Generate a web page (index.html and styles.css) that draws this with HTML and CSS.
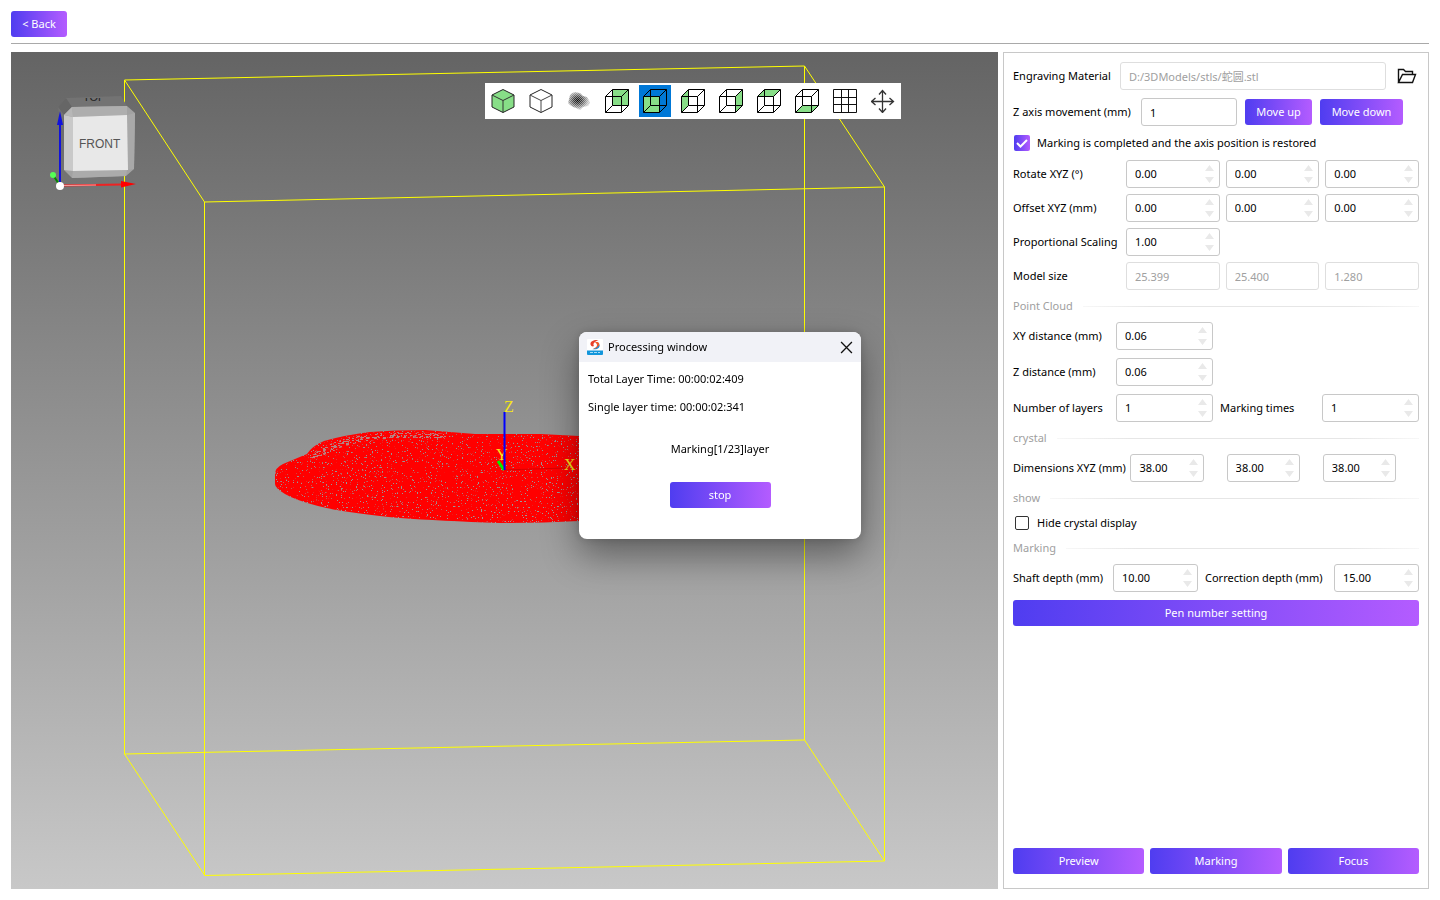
FILE: index.html
```html
<!DOCTYPE html>
<html lang="en">
<head>
	<meta charset="UTF-8">
	<title>Processing window</title>
	<link rel="stylesheet" href="styles.css">
</head>
<body>
	<!-- shared shapes for the view toolbar -->
	<svg class="defs" width="0" height="0" aria-hidden="true">
		<symbol id="wire" viewBox="0 0 24 24">
			<path d="M.5 7.5h16v16H.5zM7.5.5h16v16h-16zM.5 7.5l7-7M16.5 7.5l7-7M.5 23.5l7-7M16.5 23.5l7-7" fill="none" stroke="#000"/>
		</symbol>
		<symbol id="arrows" viewBox="0 0 9 18">
			<path d="M4.5 0L9 6H0zM0 12h9l-4.5 6z" fill="#e9e9e9"/>
		</symbol>
	</svg>

	<header class="top">
		<button class="btn back" type="button">&lt; Back</button>
	</header>

	<main class="main">
		<section class="view">
			<svg class="scene" viewBox="11 52 987 837" role="img" aria-label="3D view">
				<defs>
					<filter id="holes" x="0" y="0" width="1" height="1" color-interpolation-filters="sRGB">
						<feTurbulence type="fractalNoise" baseFrequency="0.8" numOctaves="2" seed="4" result="n"/>
						<feColorMatrix in="n" type="matrix" values="0 0 0 0 0  0 0 0 0 0  0 0 0 0 0  16 0 0 0 -10.6" result="dots"/>
						<feComposite in="SourceGraphic" in2="dots" operator="out"/>
					</filter>
					<filter id="specks" x="0" y="0" width="1" height="1" color-interpolation-filters="sRGB">
						<feTurbulence type="fractalNoise" baseFrequency="0.3 0.7" numOctaves="2" seed="9" result="n"/>
						<feColorMatrix in="n" type="matrix" values="0 0 0 0 0  0 0 0 0 0  0 0 0 0 0  20 0 0 0 -10.6" result="dots"/>
						<feComposite in="SourceGraphic" in2="dots" operator="in"/>
					</filter>
					<clipPath id="topFace"><path d="M66 98h56v4H66z"/></clipPath>
				</defs>

				<!-- crystal box -->
				<g class="crystal">
					<path d="M124.5 80L804.5 66V740L124.5 754z"/>
					<path d="M124.5 80L204.5 202M804.5 66L884.5 187M804.5 740L884.5 861M124.5 754L204.5 875"/>
					<path d="M204.5 202L884.5 187V861L204.5 875.5z"/>
				</g>

				<!-- point cloud -->
				<path filter="url(#holes)" fill="#f00" d="M275 474Q275 468 283 464L295 459L307 454Q312 446 324 441Q345 435 370 432Q395 430 425 430Q450 432 475 434L540 434L579 436L700 445V505L579 521Q540 523 500 523Q440 521 400 518Q345 513 318 506Q295 500 285 494Q275 488 275 484z"/>
				<path filter="url(#specks)" fill="#b98282" d="M308 460Q318 446 350 437Q380 432 410 432L450 434L448 438L400 438Q360 440 340 448Q325 456 308 460z"/>

				<!-- origin axes -->
				<path d="M504 470L565 468" stroke="#d80000"/>
				<path d="M504 470L498 461" stroke="#0e0" stroke-width="3"/>
				<text class="axis" x="496" y="460">Y</text>
				<path d="M504.500 470V412" stroke="#00f" stroke-width="2"/>
				<text class="axis" x="504" y="412">Z</text>
				<text class="axis" x="564" y="470">X</text>

				<!-- navigation cube -->
				<path d="M58 107L66 98L121 96L127 106L72 107L64 115L62 130z" fill="#737373"/>
				<path d="M58 107L66 98L72 107L64 115z" fill="#666"/>
				<path d="M72 107L127 106L135 113L134 169L126 176L72 178L64 170V115z" fill="#a2a2a2"/>
				<path d="M64 115L73 117V171L64 170z" fill="#c9c9c9"/>
				<path d="M72 107L127 106V115L73 117z" fill="#aeaeae"/>
				<path d="M64 115L72 107L73 117z" fill="#b7b7b7"/>
				<path d="M127 115L135 113L134 169L127 170z" fill="#a9a9a9"/>
				<path d="M73 171L127 170L126 176L72 178z" fill="#ababab"/>
				<path d="M73 117L127 115L128 170L73 171z" fill="#e8e8e8"/>
				<text class="face" x="79" y="148">FRONT</text>
				<g clip-path="url(#topFace)"><text class="face face_top" x="83" y="101">TOP</text></g>

				<path d="M60 182V124" stroke="#11d" stroke-width="2"/>
				<path d="M57 125L60 111L63 125z" fill="#11d"/>
				<path d="M60 185.500L122 184.500" stroke="#e22" stroke-width="2"/>
				<path d="M62 185.500L96 185" stroke="#f5a5a5"/>
				<path d="M121 181L136 184L121 187.500z" fill="#f00"/>
				<path d="M53 175L59 184" stroke="#080" stroke-width="2"/>
				<circle cx="53" cy="175" r="3" fill="#5f5"/>
				<circle cx="60" cy="186" r="4" fill="#fff"/>
			</svg>

			<div class="tools">
				<button class="tool" type="button" title="Solid">
					<svg viewBox="0 0 24 24"><path d="M12 .5L23 6v12l-11 5.500L1 18V6z" fill="#87de87" stroke="#222"/><path d="M1 6l11 5.500L23 6M12 11.500v12" fill="none" stroke="#333"/></svg>
				</button>
				<button class="tool" type="button" title="Wireframe">
					<svg viewBox="0 0 24 24"><path d="M12 .5L23 6v12l-11 5.500L1 18V6z" fill="#fff" stroke="#222"/><path d="M1 6l11 5.500L23 6M12 11.500v12" fill="none" stroke="#444"/></svg>
				</button>
				<button class="tool" type="button" title="Points">
					<svg viewBox="0 0 24 24">
						<defs>
							<radialGradient id="cloud" cx=".44" cy=".46"><stop offset="0" stop-color="#000"/><stop offset=".4" stop-color="#444"/><stop offset="1" stop-color="#ccc"/></radialGradient>
							<pattern id="mesh" width="2" height="2" patternUnits="userSpaceOnUse"><path d="M0 0h1v1H0zM1 1h1v1H1z" fill="#fff" fill-opacity=".45"/></pattern>
						</defs>
						<path d="M3 6l2-2 3-1 5 1 3 3 4 1 2 3 1 3-2 3-5 1-3 3-4-2-3-1-3-2-2-2 1-4z" fill="url(#cloud)"/>
						<path d="M0 2h24v20H0z" fill="url(#mesh)"/>
					</svg>
				</button>
				<button class="tool" type="button" title="Back">
					<svg viewBox="0 0 24 24"><path d="M7.500 .5h16v16h-16z" fill="#87de87"/><use href="#wire"/></svg>
				</button>
				<button class="tool on" type="button" title="Front">
					<svg viewBox="0 0 24 24"><path d="M.5 7.500h16v16H.5z" fill="#87de87"/><use href="#wire"/></svg>
				</button>
				<button class="tool" type="button" title="Left">
					<svg viewBox="0 0 24 24"><path d="M.5 7.500l7-7v16l-7 7z" fill="#87de87"/><use href="#wire"/></svg>
				</button>
				<button class="tool" type="button" title="Right">
					<svg viewBox="0 0 24 24"><path d="M16.500 7.500l7-7v16l-7 7z" fill="#87de87"/><use href="#wire"/></svg>
				</button>
				<button class="tool" type="button" title="Top">
					<svg viewBox="0 0 24 24"><path d="M.5 7.500l7-7h16l-7 7z" fill="#87de87"/><use href="#wire"/></svg>
				</button>
				<button class="tool" type="button" title="Bottom">
					<svg viewBox="0 0 24 24"><path d="M.5 23.500l7-7h16l-7 7z" fill="#87de87"/><use href="#wire"/></svg>
				</button>
				<button class="tool" type="button" title="Grid">
					<svg viewBox="0 0 24 24"><path d="M.5.5h23v23H.5zM8.500.5v23M15.500.5v23M.5 8.500h23M.5 15.500h23" fill="none" stroke="#111"/></svg>
				</button>
				<button class="tool" type="button" title="Move">
					<svg viewBox="0 0 24 24"><path d="M11.500 2v21M1 12.500h21M8 5.500l3.500-4 3.500 4M8 19.500l3.500 4 3.500-4M4.500 9L.5 12.500l4 3.500M18.500 9l4 3.500-4 3.500" fill="none" stroke="#333" stroke-width="1.300"/></svg>
				</button>
			</div>
		</section>

		<form class="panel">
			<div class="rows">
				<div class="row">
					<label class="material" for="file">Engraving Material</label>
					<input class="text grow" id="file" type="text" value="D:/3DModels/stls/蛇圆.stl" disabled>
					<button class="folder" type="button" title="Open">
						<svg viewBox="0 0 20 16"><path d="M1.500 14.500V1.500h5l2 2h7v3M1.500 14.500l4-8h13l-3 8z" fill="none" stroke="#111" stroke-width="1.400"/></svg>
					</button>
				</div>
				<div class="row">
					<label class="movement" for="zmove">Z axis movement (mm)</label>
					<input class="text grow" id="zmove" type="text" value="1">
					<button class="btn up" type="button">Move up</button>
					<button class="btn down" type="button">Move down</button>
				</div>
				<label class="check"><input type="checkbox" checked>Marking is completed and the axis position is restored</label>
			</div>

			<div class="xyz">
				<label for="rx">Rotate XYZ (°)</label>
				<span class="spin"><input id="rx" type="text" value="0.00"><svg><use href="#arrows"/></svg></span>
				<span class="spin"><input aria-label="Rotate Y" type="text" value="0.00"><svg><use href="#arrows"/></svg></span>
				<span class="spin"><input aria-label="Rotate Z" type="text" value="0.00"><svg><use href="#arrows"/></svg></span>
				<label for="ox">Offset XYZ (mm)</label>
				<span class="spin"><input id="ox" type="text" value="0.00"><svg><use href="#arrows"/></svg></span>
				<span class="spin"><input aria-label="Offset Y" type="text" value="0.00"><svg><use href="#arrows"/></svg></span>
				<span class="spin"><input aria-label="Offset Z" type="text" value="0.00"><svg><use href="#arrows"/></svg></span>
				<label for="scale">Proportional Scaling</label>
				<span class="spin"><input id="scale" type="text" value="1.00"><svg><use href="#arrows"/></svg></span>
				<label class="first" for="sx">Model size</label>
				<input class="text" id="sx" type="text" value="25.399" disabled>
				<input class="text" aria-label="Model size Y" type="text" value="25.400" disabled>
				<input class="text" aria-label="Model size Z" type="text" value="1.280" disabled>
			</div>

			<h3 class="title">Point Cloud</h3>
			<div class="cloud">
				<label for="xyd">XY distance (mm)</label>
				<span class="spin"><input id="xyd" type="text" value="0.06"><svg><use href="#arrows"/></svg></span>
				<label class="first" for="zd">Z distance (mm)</label>
				<span class="spin"><input id="zd" type="text" value="0.06"><svg><use href="#arrows"/></svg></span>
				<label class="first" for="layers">Number of layers</label>
				<span class="spin"><input id="layers" type="text" value="1"><svg><use href="#arrows"/></svg></span>
				<label class="second" for="times">Marking times</label>
				<span class="spin"><input id="times" type="text" value="1"><svg><use href="#arrows"/></svg></span>
			</div>

			<h3 class="title">crystal</h3>
			<div class="size">
				<label for="dx">Dimensions XYZ (mm)</label>
				<span class="spin"><input id="dx" type="text" value="38.00"><svg><use href="#arrows"/></svg></span>
				<span class="spin"><input aria-label="Dimension Y" type="text" value="38.00"><svg><use href="#arrows"/></svg></span>
				<span class="spin"><input aria-label="Dimension Z" type="text" value="38.00"><svg><use href="#arrows"/></svg></span>
			</div>

			<h3 class="title">show</h3>
			<label class="check"><input type="checkbox">Hide crystal display</label>

			<h3 class="title">Marking</h3>
			<div class="rows">
				<div class="depth">
					<label for="shaft">Shaft depth (mm)</label>
					<span class="spin"><input id="shaft" type="text" value="10.00"><svg><use href="#arrows"/></svg></span>
					<label class="second" for="corr">Correction depth (mm)</label>
					<span class="spin"><input id="corr" type="text" value="15.00"><svg><use href="#arrows"/></svg></span>
				</div>
				<button class="btn" type="button">Pen number setting</button>
			</div>

			<div class="actions">
				<button class="btn" type="button">Preview</button>
				<button class="btn" type="button">Marking</button>
				<button class="btn" type="button">Focus</button>
			</div>
		</form>
	</main>

	<div class="dialog" role="dialog" aria-labelledby="dlg">
		<div class="dialog_bar">
			<svg class="logo" viewBox="0 0 16 16">
				<path d="M1 0h14q1 0 1 1v11H0V1q0-1 1-1z" fill="#fff"/>
				<path d="M11.500 1C7 .5 3 2 3.500 5.500 4 7.500 6 8 7 7 5.500 5 7 3 11.500 1z" fill="#e8402a"/>
				<path d="M8 3.500c3-1.500 5.500 1 4 4-1 2-4 3-6 2 2.500-.5 4-1.500 4-3.500 0-1-1-2-2-2.500z" fill="#f0582a"/>
				<path d="M12 5c2 3-1 6.500-7 5 1 0 3.500 0 5-1.500S12.500 6.500 12 5z" fill="#1b8fd8"/>
				<path d="M0 11.500h16V15q0 1-1 1H1q-1 0-1-1z" fill="#1296db"/>
				<path d="M3 13.500h10" stroke="#a9dcf5" stroke-dasharray="3 1"/>
			</svg>
			<h2 id="dlg">Processing window</h2>
			<button class="close" type="button" title="Close">
				<svg viewBox="0 0 12 12"><path d="M1 1l10 10M11 1L1 11" stroke="#111" stroke-width="1.200"/></svg>
			</button>
		</div>
		<div class="dialog_body">
			<p>Total Layer Time: 00:00:02:409</p>
			<p>Single layer time: 00:00:02:341</p>
			<p class="state">Marking[1/23]layer</p>
			<button class="btn stop" type="button">stop</button>
		</div>
	</div>
</body>
</html>
```
FILE: styles.css
```css
*{
	box-sizing: border-box;
}
html,body{
	height: 100%;
}
body{
	display: flex;
	flex-direction: column;
	margin: 0;
	padding: 11px;
	color: #000;
	background-color: white;
	font-family: "Noto Sans", "Noto Sans CJK SC", sans-serif;
	font-size: 11px;
	line-height: 18px;
}
button,input{
	font: inherit;
	color: inherit;
}
svg{
	display: block;
}
label{
	white-space: nowrap;
}
.defs{
	position: absolute;
}
.btn{
	height: 26px;
	padding: 0 10px;
	border: 0;
	border-radius: 3px;
	color: white;
	background-image: linear-gradient(90deg, #4f3df0, #b45cff);
	white-space: nowrap;
	cursor: pointer;
}
.top{
	padding-bottom: 6px;
	border-bottom: 1px solid #a9a9a9;
	margin-bottom: 8px;
}
.back{
	display: block;
	width: 56px;
	padding: 0;
}
.main{
	display: flex;
	flex: 1;
	gap: 5px;
	min-height: 0;
}

/* 3D view */
.view{
	position: relative;
	flex: 1;
	min-width: 0;
	background-image: linear-gradient(#646464, #c8c8c8);
}
.scene{
	width: 100%;
	height: 100%;
}
.crystal path{
	fill: none;
	stroke: #ff0;
}
.axis{
	fill: #f5e51b;
	font-family: "Liberation Serif", serif;
	font-size: 16px;
}
.face{
	fill: #555;
	font-family: "Liberation Sans", sans-serif;
	font-size: 12px;
}
.face_top{
	fill: #222;
	font-size: 11px;
}
.tools{
	position: absolute;
	top: 31px;
	right: 97px;
	display: flex;
	gap: 6px;
	padding: 2px;
	background-color: white;
}
.tool{
	display: grid;
	place-items: center;
	width: 32px;
	height: 32px;
	padding: 0;
	border: 0;
	background-color: transparent;
}
.tool svg{
	width: 24px;
	height: 24px;
}
.tool.on{
	background-color: #0078d7;
}

/* settings */
.panel{
	display: flex;
	flex-direction: column;
	width: 426px;
	padding: 9px 9px 14px;
	border: 1px solid #c8c8c8;
}
.rows{
	display: grid;
	gap: 8px;
}
.row{
	display: flex;
	align-items: center;
	gap: 8px;
}
.material{
	width: 99px;
}
.movement{
	width: 120px;
}
.text,.spin{
	width: 100%;
	min-width: 0;
	height: 28px;
	border: 1px solid #c8c8c8;
	border-radius: 3px;
	background-color: white;
}
.text{
	padding: 0 8px;
}
.text:disabled{
	color: #a0a0a0;
	border-color: #dedede;
}
.grow{
	flex: 1;
	width: 0;
}
.spin{
	display: flex;
	align-items: center;
	padding: 0 5px 0 8px;
}
.spin input{
	flex: 1;
	width: 0;
	min-width: 0;
	padding: 0;
	border: 0;
	outline: 0;
}
.spin svg{
	width: 9px;
	height: 18px;
}
.folder{
	display: grid;
	place-items: center;
	width: 25px;
	height: 26px;
	padding: 0;
	border: 0;
	background-color: transparent;
}
.folder svg{
	width: 20px;
	height: 16px;
}
.up{
	width: 67px;
}
.down{
	width: 83px;
	margin-right: 16px;
}
.check{
	display: flex;
	align-items: center;
	gap: 7px;
	height: 18px;
}
.check input{
	appearance: none;
	width: 14px;
	height: 14px;
	margin: 0 1px 0 2px;
	border: 1px solid #333;
	border-radius: 2px;
}
.check input:checked{
	width: 16px;
	height: 16px;
	margin: 0 0 0 1px;
	border: 0;
	background-image: url("data:image/svg+xml,%3Csvg xmlns='http://www.w3.org/2000/svg' viewBox='0 0 16 16'%3E%3Cpath d='M3 8l3.500 3.500L13 5' fill='none' stroke='white' stroke-width='2'/%3E%3C/svg%3E"), linear-gradient(90deg, #4f3df0, #b45cff);
}
.xyz,.cloud,.depth{
	display: grid;
	align-items: center;
}
.xyz{
	grid-template-columns: 107px repeat(3, 1fr);
	gap: 6px;
	margin-top: 8px;
}
.cloud{
	grid-template-columns: 103px 97px 1fr 97px;
	row-gap: 8px;
}
.depth{
	grid-template-columns: 100px 85px 1fr 85px;
}
.first{
	grid-column: 1;
}
.second{
	padding-left: 7px;
}
.size{
	display: flex;
	align-items: center;
}
.size label{
	width: 119px;
}
.size .spin{
	width: 74px;
	margin-right: 23px;
}
.title{
	display: flex;
	align-items: center;
	gap: 10px;
	height: 20px;
	margin: 6px 0;
	color: #a0a0a0;
	font-size: 11px;
	font-weight: normal;
}
.title::after{
	content: "";
	flex: 1;
	height: 1px;
	background-image: linear-gradient(90deg, #f7f7f7, #e6e6e6 20%, #e6e6e6 80%, #f7f7f7);
}
.actions{
	display: grid;
	grid-template-columns: repeat(3, 1fr);
	gap: 6px;
	margin-top: auto;
}

/* processing window */
.dialog{
	position: fixed;
	top: 332px;
	left: calc(50% - 141px);
	width: 282px;
	overflow: hidden;
	border-radius: 8px;
	background-color: white;
	box-shadow: 0 16px 36px rgba(0,0,0,.4), 0 0 10px rgba(0,0,0,.15);
}
.dialog_bar{
	display: flex;
	align-items: center;
	gap: 5px;
	height: 30px;
	padding: 0 8px;
	background-color: #f1f2f7;
}
.dialog_bar h2{
	flex: 1;
	margin: 0;
	font-size: 11px;
	font-weight: normal;
}
.logo{
	width: 16px;
	height: 16px;
}
.close{
	padding: 0;
	border: 0;
	background-color: transparent;
}
.close svg{
	width: 13px;
	height: 13px;
}
.dialog_body{
	display: flex;
	flex-direction: column;
	gap: 10px;
	padding: 8px 9px 31px;
}
.dialog_body p{
	margin: 0;
}
.dialog_body .state{
	margin: 14px 0;
	text-align: center;
}
.stop{
	align-self: center;
	width: 101px;
}
```
